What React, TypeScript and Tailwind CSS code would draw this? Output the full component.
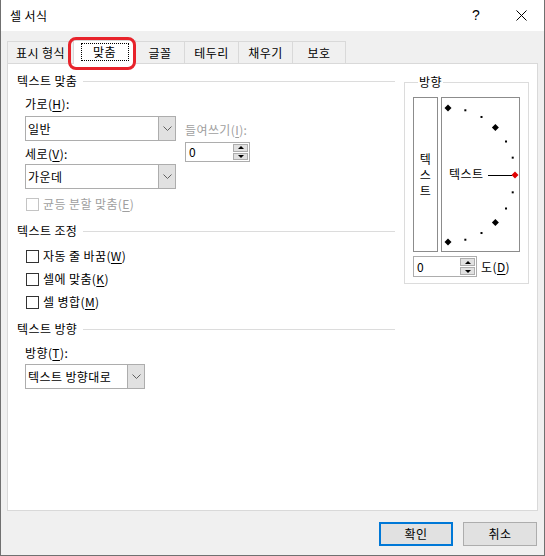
import React from 'react';

const Mn: React.FC<{ c: string }> = ({ c }) => (
  <span className="underline underline-offset-[2px] decoration-[1px]">{c}</span>
);

const Chevron: React.FC = () => (
  <svg width="9" height="5" viewBox="0 0 9 5" fill="none" stroke="#606060" strokeWidth="1">
    <path d="M0.5 0.5 L4.5 4.5 L8.5 0.5" />
  </svg>
);

const GroupLabel: React.FC<{ text: string }> = ({ text }) => (
  <div className="flex h-4 items-center">
    <span className="leading-4">{text}</span>
    <div className="ml-[6px] h-px flex-1 bg-[#dcdcdc]"></div>
  </div>
);

const Select: React.FC<{ value: string; width: string }> = ({ value, width }) => (
  <div className={`flex h-[25px] border border-[#adadad] bg-white ${width}`}>
    <div className="flex flex-1 items-center pl-[2px] leading-4">{value}</div>
    <div className="flex w-[17px] items-center justify-center border-l border-[#adadad] bg-[#e1e1e1]">
      <Chevron />
    </div>
  </div>
);

const Spinner: React.FC<{ width: string; height: string }> = ({ width, height }) => (
  <div className={`flex border border-[#adadad] bg-white ${width} ${height}`}>
    <div className="flex flex-1 items-center pl-[3px] leading-4">0</div>
    <div className="flex w-[17px] flex-col gap-px p-px">
      <div className="flex flex-1 items-center justify-center border border-[#adadad] bg-[#e1e1e1]">
        <svg width="6" height="3" viewBox="0 0 6 3"><path d="M0 3 L3 0 L6 3 Z" fill="#000" /></svg>
      </div>
      <div className="flex flex-1 items-center justify-center border border-[#adadad] bg-[#e1e1e1]">
        <svg width="6" height="3" viewBox="0 0 6 3"><path d="M0 0 L6 0 L3 3 Z" fill="#000" /></svg>
      </div>
    </div>
  </div>
);

const Check: React.FC<{ children: React.ReactNode; disabled?: boolean; className?: string }> = ({ children, disabled, className }) => (
  <div className={`flex h-4 items-center pl-[9px] ${className ?? ''}`}>
    <div className={`h-[13px] w-[13px] bg-white border ${disabled ? 'border-[#c4c4c4]' : 'border-[#333333]'}`}></div>
    <span className={`ml-[4px] leading-4 ${disabled ? 'text-[#a0a0a0]' : ''}`}>{children}</span>
  </div>
);

const Dial: React.FC = () => {
  const cx = 6;
  const cy = 77;
  const r = 67;
  const pts = [];
  for (let a = -90; a <= 90; a += 15) {
    const rad = (a * Math.PI) / 180;
    pts.push({ a, x: cx + r * Math.cos(rad), y: cy - r * Math.sin(rad) });
  }
  return (
    <svg width="78" height="153" viewBox="0 0 78 153">
      {pts.map((p) => {
        if (p.a === 0) return null;
        if (p.a % 45 === 0) {
          return (
            <polygon
              key={p.a}
              points={`${p.x},${p.y - 3.5} ${p.x + 3.5},${p.y} ${p.x},${p.y + 3.5} ${p.x - 3.5},${p.y}`}
              fill="#000"
            />
          );
        }
        return <rect key={p.a} x={p.x - 1} y={p.y - 1} width="2" height="2" fill="#000" />;
      })}
      <text x="7" y="81" fontSize="12" fill="#000">텍스트</text>
      <line x1="46" y1="77.5" x2="70" y2="77.5" stroke="#000" strokeWidth="1" />
      <polygon points="73,73.5 76.5,77 73,80.5 69.5,77" fill="#e00000" />
    </svg>
  );
};

const tabs = [
  { label: '표시 형식', w: 'w-[67px]' },
  { label: '맞춤', w: 'w-[63px]', active: true },
  { label: '글꼴', w: 'w-[50px]' },
  { label: '테두리', w: 'w-[55px]' },
  { label: '채우기', w: 'w-[55px]' },
  { label: '보호', w: 'w-[54px]' },
];

const App: React.FC = () => {
  return (
    <div className='relative flex h-[556px] w-[545px] flex-col border-x border-b border-[#707070] bg-[#f0f0f0] text-[12px] tracking-[0.4px] text-black font-["Noto_Sans_CJK_KR","Noto_Sans",sans-serif]'>
      {/* title bar */}
      <div className="flex h-[31px] items-center bg-white">
        <span className="pl-[9px] leading-4">셀 서식</span>
        <div className="ml-auto flex h-full">
          <div className="flex w-[46px] items-center justify-center text-[14px] font-['Liberation_Sans',sans-serif]">?</div>
          <div className="flex w-[45px] items-center justify-center">
            <svg width="11" height="11" viewBox="0 0 11 11" stroke="#000" strokeWidth="1">
              <path d="M0.5 0.5 L10.5 10.5 M10.5 0.5 L0.5 10.5" />
            </svg>
          </div>
        </div>
      </div>

      {/* tabs */}
      <div className="relative z-10 -mb-px ml-[6px] mt-[9px] flex h-[24px] items-end">
        {tabs.map((t, i) => (
          <div
            key={t.label}
            className={`flex items-center justify-center border-x border-t border-[#d9d9d9] ${t.w} ${i > 0 ? '-ml-px' : ''} ${
              t.active ? 'relative z-10 h-[24px] bg-white pb-[2px]' : 'mb-px h-[22px] bg-[#f0f0f0]'
            }`}
          >
            {t.active ? (
              <span className="flex h-[18px] w-[48px] items-center justify-center border border-dotted border-black leading-4">
                {t.label}
              </span>
            ) : (
              <span className="leading-4">{t.label}</span>
            )}
          </div>
        ))}
      </div>

      {/* panel */}
      <div className="mx-[6px] flex h-[448px] border border-[#d9d9d9] bg-white pl-[9px]">
        {/* left column */}
        <div className="flex w-[378px] flex-col pt-[9px]">
          <GroupLabel text="텍스트 맞춤" />
          <div className="mt-[7px] flex pl-[8px]">
            <div className="flex w-[151px] flex-col">
              <div className="leading-4">가로(<Mn c="H" />):</div>
              <div className="mt-[4px]">
                <Select value="일반" width="w-[151px]" />
              </div>
              <div className="mt-[5px] leading-4">세로(<Mn c="V" />):</div>
              <div className="mt-[2px]">
                <Select value="가운데" width="w-[151px]" />
              </div>
            </div>
            <div className="ml-[9px] flex flex-col pt-[26px]">
              <div className="leading-4 text-[#a0a0a0]">들여쓰기(<Mn c="I" />):</div>
              <div className="mt-[4px]">
                <Spinner width="w-[65px]" height="h-[20px]" />
              </div>
            </div>
          </div>
          <Check disabled className="mt-[7px]">
            균등 분할 맞춤(<Mn c="E" />)
          </Check>

          <div className="mt-[11px]">
            <GroupLabel text="텍스트 조정" />
          </div>
          <div className="mt-[9px] flex flex-col gap-[7px]">
            <Check>
              자동 줄 바꿈(<Mn c="W" />)
            </Check>
            <Check>
              셀에 맞춤(<Mn c="K" />)
            </Check>
            <Check>
              셀 병합(<Mn c="M" />)
            </Check>
          </div>

          <div className="mt-[11px]">
            <GroupLabel text="텍스트 방향" />
          </div>
          <div className="mt-[8px] pl-[8px] leading-4">방향(<Mn c="T" />):</div>
          <div className="mt-[3px] pl-[8px]">
            <Select value="텍스트 방향대로" width="w-[120px]" />
          </div>
        </div>

        {/* right column */}
        <div className="ml-[9px] pt-[10px]">
          <fieldset className="w-[124px] border border-[#dcdcdc] px-[8px] pb-[6px]">
            <legend className="ml-[5px] px-px leading-4">방향</legend>
            <div className="mt-[7px] flex gap-[3px]">
              <div className="flex h-[155px] w-[25px] flex-col items-center justify-center border border-[#8c8c8c] leading-4">
                <span>텍</span>
                <span>스</span>
                <span>트</span>
              </div>
              <div className="h-[155px] w-[79px] border border-[#8c8c8c]">
                <Dial />
              </div>
            </div>
            <div className="mt-[4px] flex items-center">
              <Spinner width="w-[64px]" height="h-[21px]" />
              <span className="ml-[4px] leading-4">
                도(<Mn c="D" />)
              </span>
            </div>
          </fieldset>
        </div>
      </div>

      {/* footer */}
      <div className="mt-[11px] flex justify-end gap-[10px] pr-[7px]">
        <button className="flex h-[24px] w-[74px] items-center justify-center border-2 border-[#0078d7] bg-[#e1e1e1] leading-4">
          확인
        </button>
        <button className="flex h-[24px] w-[74px] items-center justify-center border border-[#adadad] bg-[#e1e1e1] leading-4">
          취소
        </button>
      </div>

      {/* annotation ring */}
      <div className="pointer-events-none absolute left-[67px] top-[37px] z-20 h-[33px] w-[68px] rounded-[8px] border-[3px] border-[#e8232b]"></div>
    </div>
  );
};

export default App;
